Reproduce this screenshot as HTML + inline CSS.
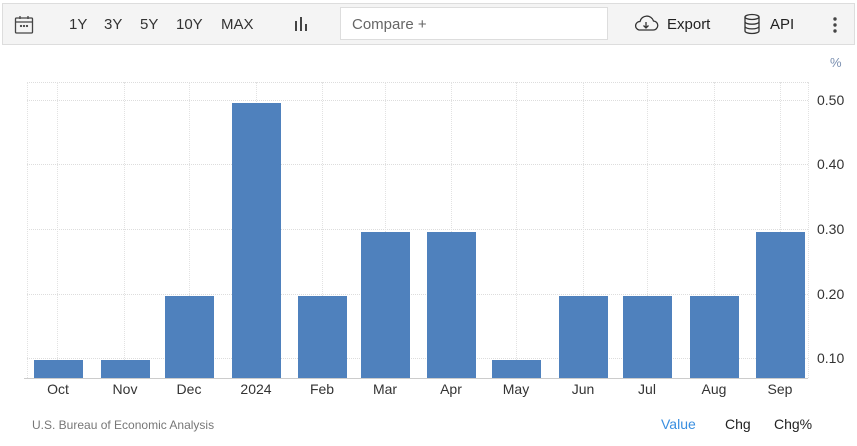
<!DOCTYPE html>
<html><head><style>
body{margin:0;width:857px;height:446px;background:#fff;font-family:"Liberation Sans",sans-serif;position:relative;overflow:hidden}
.tb{position:absolute;left:2px;top:3px;width:851px;height:40px;background:#f4f4f4;border:1px solid #ddd}
.t{position:absolute;top:16px;font-size:15px;color:#333}
.cmp{position:absolute;left:340px;top:7px;width:268px;height:33px;background:#fff;border:1px solid #ddd;box-sizing:border-box;font-size:15px;color:#666;padding:8px 11px}
.bar{position:absolute;background:#4f81bd;width:49px;bottom:68px}
.xl{position:absolute;top:381px;font-size:14px;color:#333;width:60px;text-align:center}
.yl{position:absolute;left:817px;font-size:14px;color:#333}
.hl{position:absolute;left:27px;width:781px;border-top:1px dotted #ddd}
.vl{position:absolute;top:82px;height:296px;border-left:1px dotted #e2e2e2}
</style></head><body>
<div class="tb"></div>
<svg style="position:absolute;left:14px;top:15px" width="20" height="20" viewBox="0 0 20 20" fill="none" stroke="#444" stroke-width="1.3"><rect x="1.5" y="3" width="17" height="15" rx="1"/><line x1="1.5" y1="7" x2="18.5" y2="7"/><line x1="6" y1="1" x2="6" y2="4"/><line x1="14" y1="1" x2="14" y2="4"/><circle cx="7" cy="11" r=".5"/><circle cx="10" cy="11" r=".5"/><circle cx="13" cy="11" r=".5"/></svg>
<div class="t" style="left:69px">1Y</div><div class="t" style="left:104px">3Y</div><div class="t" style="left:140px">5Y</div><div class="t" style="left:176px">10Y</div><div class="t" style="left:221px">MAX</div>
<svg style="position:absolute;left:294px;top:16px" width="16" height="16"><rect x="1" y="5" width="2" height="10" fill="#444"/><rect x="6" y="1" width="2" height="14" fill="#444"/><rect x="11" y="8" width="2" height="7" fill="#444"/></svg>
<div class="cmp">Compare +</div>
<svg style="position:absolute;left:633px;top:15px" width="26" height="18" viewBox="0 0 26 18" fill="none" stroke="#333" stroke-width="1.3"><path d="M6 15h14a4.5 4.5 0 0 0 .5-9A7 7 0 0 0 7 6.5 4.3 4.3 0 0 0 6 15z"/><path d="M13 7v6M10.5 10.5 13 13l2.5-2.5"/></svg>
<div class="t" style="left:667px;color:#222">Export</div>
<svg style="position:absolute;left:743px;top:13px" width="18" height="22" viewBox="0 0 18 22" fill="none" stroke="#333" stroke-width="1.3"><ellipse cx="9" cy="4" rx="7" ry="2.5"/><path d="M2 4v14c0 1.4 3.1 2.5 7 2.5s7-1.1 7-2.5V4M2 8.7c0 1.4 3.1 2.5 7 2.5s7-1.1 7-2.5M2 13.4c0 1.4 3.1 2.5 7 2.5s7-1.1 7-2.5"/></svg>
<div class="t" style="left:770px;color:#222">API</div>
<svg style="position:absolute;left:832px;top:17px" width="6" height="16"><circle cx="3" cy="2" r="1.7" fill="#444"/><circle cx="3" cy="8" r="1.7" fill="#444"/><circle cx="3" cy="14" r="1.7" fill="#444"/></svg>
<div style="position:absolute;left:830px;top:55px;font-size:13px;color:#7a8fb0">%</div>
<div class="hl" style="top:82px"></div><div class="hl" style="top:100px"></div><div class="hl" style="top:164px"></div><div class="hl" style="top:229px"></div><div class="hl" style="top:294px"></div><div class="hl" style="top:358px"></div>
<div class="vl" style="left:27px"></div><div class="vl" style="left:57px"></div><div class="vl" style="left:124px"></div><div class="vl" style="left:189px"></div><div class="vl" style="left:256px"></div><div class="vl" style="left:322px"></div><div class="vl" style="left:385px"></div><div class="vl" style="left:451px"></div><div class="vl" style="left:516px"></div><div class="vl" style="left:583px"></div><div class="vl" style="left:647px"></div><div class="vl" style="left:714px"></div><div class="vl" style="left:780px"></div><div class="vl" style="left:808px"></div>
<div style="position:absolute;left:24px;top:378px;width:784px;border-top:1px solid #ccc"></div>
<div class="bar" style="left:34px;top:360px"></div><div class="bar" style="left:101px;top:360px"></div><div class="bar" style="left:165px;top:296px"></div><div class="bar" style="left:232px;top:103px"></div><div class="bar" style="left:298px;top:296px"></div><div class="bar" style="left:361px;top:232px"></div><div class="bar" style="left:427px;top:232px"></div><div class="bar" style="left:492px;top:360px"></div><div class="bar" style="left:559px;top:296px"></div><div class="bar" style="left:623px;top:296px"></div><div class="bar" style="left:690px;top:296px"></div><div class="bar" style="left:756px;top:232px"></div>
<div class="xl" style="left:28px">Oct</div><div class="xl" style="left:95px">Nov</div><div class="xl" style="left:159px">Dec</div><div class="xl" style="left:226px">2024</div><div class="xl" style="left:292px">Feb</div><div class="xl" style="left:355px">Mar</div><div class="xl" style="left:421px">Apr</div><div class="xl" style="left:486px">May</div><div class="xl" style="left:553px">Jun</div><div class="xl" style="left:617px">Jul</div><div class="xl" style="left:684px">Aug</div><div class="xl" style="left:750px">Sep</div>
<div class="yl" style="top:92px">0.50</div><div class="yl" style="top:156px">0.40</div><div class="yl" style="top:221px">0.30</div><div class="yl" style="top:286px">0.20</div><div class="yl" style="top:350px">0.10</div>
<div style="position:absolute;left:32px;top:418px;font-size:12px;color:#777">U.S. Bureau of Economic Analysis</div>
<div style="position:absolute;left:661px;top:416px;font-size:14px;color:#3a8fe0">Value</div>
<div style="position:absolute;left:725px;top:416px;font-size:14px;color:#222">Chg</div>
<div style="position:absolute;left:774px;top:416px;font-size:14px;color:#222">Chg%</div>
</body></html>
